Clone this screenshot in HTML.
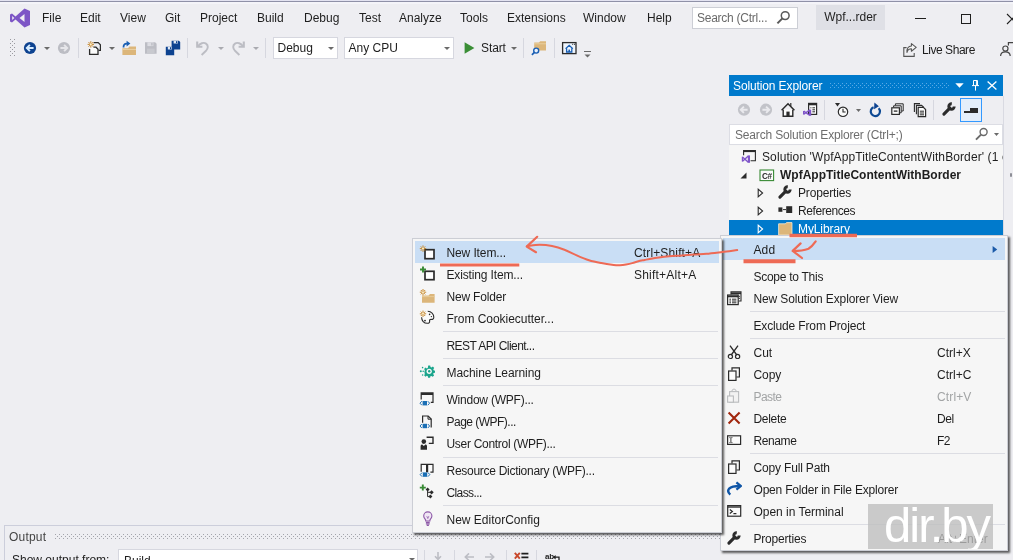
<!DOCTYPE html>
<html>
<head>
<meta charset="utf-8">
<style>
*{box-sizing:border-box;margin:0;padding:0}
body{will-change:transform}
html,body{width:1013px;height:560px;overflow:hidden;background:#eeeef2;font-family:"Liberation Sans",sans-serif;font-size:12px;color:#1e1e1e}
.abs{position:absolute}
#topline{left:0;top:0;width:1013px;height:4px;background:linear-gradient(#e3e3f1 0,#e3e3f1 1px,#8f91a8 1px,#8f91a8 2px,#f4f4f9 2px,#f4f4f9 4px)}
.mi{position:absolute;top:11px;font-size:12px;color:#1e1e1e;white-space:nowrap}
#search{left:692px;top:7px;width:106px;height:22px;letter-spacing:-.25px;background:#fff;border:1px solid #ccced5;font-size:12px;color:#6a6a6a;padding:3px 0 0 4px;white-space:nowrap;overflow:hidden}
#badge{left:816px;top:5px;width:69px;height:25px;background:#dfe0e6;font-size:12px;color:#1e1e1e;text-align:center;line-height:25px}
/* solution explorer */
#se{left:729px;top:76px;width:274px;height:170px;background:#f5f5f5}
#setitle{left:0;top:-1px;width:274px;height:21px;background:#007acc;color:#fff;font-size:12px;line-height:22px;padding-left:4px;letter-spacing:-.12px}
#setb{left:0;top:20px;width:274px;height:29px;background:#eeeef2}
#sesearch{left:0;top:48px;width:274px;height:21px;background:#fff;border:1px solid #dcdde4;color:#6d6d6d;font-size:12px;line-height:20px;padding-left:5px;letter-spacing:-.17px}
#setree{left:0;top:70px;width:274px;height:100px;background:#f6f6f6}
.row{position:absolute;left:0;width:274px;height:18px;line-height:18px;font-size:12px;white-space:nowrap;overflow:hidden}
/* menus */
.menu{position:absolute;background:#f6f6f6;border:1px solid #ccced5;box-shadow:2px 2px 2px rgba(0,0,0,.62)}
.it{position:absolute;left:0;width:286px;height:22px;line-height:24px;font-size:12px;white-space:nowrap}
.it .t{position:absolute;left:32.5px}
.it .k{position:absolute}
.sep{position:absolute;height:1px;background:#dcdde3}
.hl{background:#c9def5}
.dis{color:#a2a4a5}
.combo{background:#fff;border:1px solid #d6d7df;font-size:12px;line-height:20px;padding-left:3.500px;white-space:nowrap}
#wm{left:868px;top:504px;width:125px;height:45px;background:rgba(190,190,190,.78);color:#fff;font-size:49px;line-height:42px;text-align:left;padding-left:16px;letter-spacing:-2px;overflow:hidden;white-space:nowrap}
</style>
</head>
<body>
<div class="abs" id="topline"></div>

<!-- menu bar -->
<svg class="abs" style="left:9px;top:8px" width="22" height="20" viewBox="0 0 22 20"><path d="M15.5 0.5 L21 3 V17 L15.5 19.5 L6.5 11.5 L3 14.5 L1 13.5 V6.5 L3 5.5 L6.5 8.5 Z M15.5 6 L10.5 10 L15.5 14 Z M3.2 8 V12 L5.3 10 Z" fill="#7d56c6" fill-rule="evenodd"/></svg>
<div class="mi" style="left:42px">File</div>
<div class="mi" style="left:80px">Edit</div>
<div class="mi" style="left:120px">View</div>
<div class="mi" style="left:165px">Git</div>
<div class="mi" style="left:200px">Project</div>
<div class="mi" style="left:257px">Build</div>
<div class="mi" style="left:304px">Debug</div>
<div class="mi" style="left:359px">Test</div>
<div class="mi" style="left:399px">Analyze</div>
<div class="mi" style="left:460px">Tools</div>
<div class="mi" style="left:507px">Extensions</div>
<div class="mi" style="left:583px">Window</div>
<div class="mi" style="left:647px">Help</div>
<div class="abs" id="search">Search (Ctrl...</div>
<div class="abs" id="badge">Wpf...rder</div>

<!-- TOOLBAR -->
<div id="toolbar">
<svg class="abs" style="left:10px;top:39px" width="6" height="18" viewBox="0 0 6 18" shape-rendering="crispEdges"><rect x="0" y="0" width="1" height="1" fill="#9a9aa0"/><rect x="4" y="0" width="1" height="1" fill="#9a9aa0"/><rect x="2" y="2" width="1" height="1" fill="#9a9aa0"/><rect x="0" y="4" width="1" height="1" fill="#9a9aa0"/><rect x="4" y="4" width="1" height="1" fill="#9a9aa0"/><rect x="2" y="6" width="1" height="1" fill="#9a9aa0"/><rect x="0" y="8" width="1" height="1" fill="#9a9aa0"/><rect x="4" y="8" width="1" height="1" fill="#9a9aa0"/><rect x="2" y="10" width="1" height="1" fill="#9a9aa0"/><rect x="0" y="12" width="1" height="1" fill="#9a9aa0"/><rect x="4" y="12" width="1" height="1" fill="#9a9aa0"/><rect x="2" y="14" width="1" height="1" fill="#9a9aa0"/><rect x="0" y="16" width="1" height="1" fill="#9a9aa0"/><rect x="4" y="16" width="1" height="1" fill="#9a9aa0"/></svg>
<svg class="abs" style="left:23px;top:41px" width="14" height="14" viewBox="0 0 14 14"><circle cx="7" cy="7" r="6.1" fill="#0d4290"/><path d="M10.600 7H4.200M6.900 3.900L3.800 7L6.900 10.100" stroke="#d6ecff" stroke-width="1.900" fill="none"/></svg>
<svg class="abs" style="left:44px;top:47px" width="6" height="3" viewBox="0 0 6 3"><path d="M0 0H6L3 3Z" fill="#6a6a6a"/></svg>
<svg class="abs" style="left:57px;top:41px" width="14" height="14" viewBox="0 0 14 14"><circle cx="7" cy="7" r="6.100" fill="#bcbdc4"/><path d="M3.400 7H9.800M7.100 3.900L10.200 7L7.100 10.100" stroke="#e6e6ea" stroke-width="1.900" fill="none"/></svg>
<div class="abs" style="left:78px;top:38px;width:1px;height:20px;background:#d6d7df"></div>
<svg class="abs" style="left:87px;top:40px" width="16" height="16" viewBox="0 0 16 16"><path d="M6.600 2.600H11.200L13.400 4.800V10.400H11.600" fill="none" stroke="#2b2b2b" stroke-width="1.200"/><path d="M2.600 9V14.400H11V9.200L9 7.200H6.400" fill="#fbfbfb" stroke="#2b2b2b" stroke-width="1.300"/><g stroke="#c27d1a" stroke-width=".9"><path d="M3.800 1.200V7.600M.6 4.400H7M1.500 2.100L6.100 6.700M6.100 2.100L1.500 6.700"/></g><circle cx="3.800" cy="4.400" r="1.05" fill="#fbeec8"/></svg>
<svg class="abs" style="left:109px;top:47px" width="6" height="3" viewBox="0 0 6 3"><path d="M0 0H6L3 3Z" fill="#6a6a6a"/></svg>
<svg class="abs" style="left:121px;top:40px" width="16" height="16" viewBox="0 0 16 16"><path d="M1.400 15V8.200H7L8.400 6.400H15V15Z" fill="#dcb67a"/><path d="M1.400 9.400H15" stroke="#ecd5a8" stroke-width=".9"/><path d="M5.600 .8L9.400 3.600L5.600 6.400V4.600C4.200 4.600 3.400 5.400 3.400 7.400H1.600C1.600 4.400 3 2.800 5.600 2.700Z" fill="#1a5fb4"/></svg>
<svg class="abs" style="left:144px;top:41px" width="14" height="14" viewBox="0 0 14 14"><path d="M1 1.300H11.200L12.600 2.700V12.700H1Z" fill="#bcbdc4"/><rect x="3.400" y="1.300" width="6" height="3.800" fill="#dcdce2"/><rect x="7.200" y="1.900" width="1.400" height="2.600" fill="#bcbdc4"/><rect x="3" y="7.600" width="7.600" height="5.100" fill="#c8c9cf"/></svg>
<svg class="abs" style="left:165px;top:40px" width="16" height="16" viewBox="0 0 16 16"><path d="M6.6 0.8H13.9L15.2 2.1V9.4H6.6Z" fill="#0d4290"/><rect x="8.6" y="0.8" width="4.2" height="2.700" fill="#dfe7f3"/><rect x="11.0" y="1.2" width="1.200" height="1.900" fill="#0d4290"/><path d="M0.8 6.8H7.9L9.2 8.1V15.2H0.8Z" fill="#0d4290"/><rect x="2.8" y="6.8" width="4.0" height="2.700" fill="#dfe7f3"/><rect x="5" y="7.2" width="1.200" height="1.900" fill="#0d4290"/></svg>
<div class="abs" style="left:187px;top:38px;width:1px;height:20px;background:#d6d7df"></div>
<svg class="abs" style="left:196px;top:40px" width="14" height="16" viewBox="0 0 14 16"><path d="M1.200 1.600V6.800H6.400" fill="none" stroke="#bcbdc4" stroke-width="2.100"/><path d="M2 6.200C4 3.400 7.600 2 10 3.600C12.600 5.400 12.200 8.600 10 10.800L5.600 15" fill="none" stroke="#bcbdc4" stroke-width="1.900"/></svg>
<svg class="abs" style="left:218px;top:47px" width="6" height="3" viewBox="0 0 6 3"><path d="M0 0H6L3 3Z" fill="#a9aab0"/></svg>
<svg class="abs" style="left:231px;top:40px;transform:scaleX(-1)" width="14" height="16" viewBox="0 0 14 16"><path d="M1.200 1.600V6.800H6.400" fill="none" stroke="#bcbdc4" stroke-width="2.100"/><path d="M2 6.200C4 3.400 7.600 2 10 3.600C12.600 5.400 12.200 8.600 10 10.800L5.600 15" fill="none" stroke="#bcbdc4" stroke-width="1.900"/></svg>
<svg class="abs" style="left:253px;top:47px" width="6" height="3" viewBox="0 0 6 3"><path d="M0 0H6L3 3Z" fill="#a9aab0"/></svg>
<div class="abs" style="left:265px;top:38px;width:1px;height:20px;background:#d6d7df"></div>
<div class="abs combo" style="left:273px;top:37px;width:65px;height:22px"><span>Debug</span></div><svg class="abs" style="left:328px;top:47px" width="6" height="3" viewBox="0 0 6 3"><path d="M0 0H6L3 3Z" fill="#6a6a6a"/></svg>
<div class="abs combo" style="left:344px;top:37px;width:110px;height:22px"><span>Any CPU</span></div><svg class="abs" style="left:444px;top:47px" width="6" height="3" viewBox="0 0 6 3"><path d="M0 0H6L3 3Z" fill="#6a6a6a"/></svg>
<svg class="abs" style="left:464px;top:42px" width="11" height="12" viewBox="0 0 11 12"><path d="M.6 .2L10.400 6L.6 11.800Z" fill="#3a8e36"/></svg>
<div class="abs" style="left:481px;top:41px;font-size:12px;line-height:14px;letter-spacing:-.1px">Start</div>
<svg class="abs" style="left:511px;top:47px" width="6" height="3" viewBox="0 0 6 3"><path d="M0 0H6L3 3Z" fill="#6a6a6a"/></svg>
<div class="abs" style="left:523px;top:38px;width:1px;height:20px;background:#d6d7df"></div>
<svg class="abs" style="left:531px;top:40px" width="16" height="16" viewBox="0 0 16 16"><path d="M3.200 10.400V2.600H8L9.200 1.200H15V10.400Z" fill="#dcb67a"/><path d="M3.200 3.800H15" stroke="#ecd5a8" stroke-width=".8"/><circle cx="5.200" cy="10.600" r="2.500" fill="#eaf2fb" stroke="#1a5fb4" stroke-width="1.400"/><path d="M3.400 12.400L.9 14.900" stroke="#1a5fb4" stroke-width="1.700"/></svg>
<div class="abs" style="left:554px;top:38px;width:1px;height:20px;background:#d6d7df"></div>
<svg class="abs" style="left:561px;top:41px" width="16" height="14" viewBox="0 0 16 14"><rect x="1.600" y="1.600" width="13.400" height="11" fill="#eef4fb" stroke="#2b2b2b" stroke-width="1.300"/><path d="M11.200 3.300H12.200M13 3.300H14" stroke="#2b2b2b" stroke-width="1"/><path d="M4.600 7.800L8.200 4.400L11.800 7.800M5.600 7.400V11H10.800V7.400" fill="none" stroke="#1a5fb4" stroke-width="1.300"/><rect x="7.400" y="8.600" width="1.600" height="2.400" fill="#1a5fb4"/></svg>
<svg class="abs" style="left:584px;top:50px" width="7" height="8" viewBox="0 0 7 8"><path d="M0 1.500H7" stroke="#6a6a6a" stroke-width="1"/><path d="M.500 4.500H6.500L3.500 7.500Z" fill="#6a6a6a"/></svg>
<svg class="abs" style="left:902px;top:42px" width="16" height="16" viewBox="0 0 16 16"><path d="M4.600 5.600H1.800V14.400H12.200V11" fill="none" stroke="#555" stroke-width="1.100"/><path d="M9.400 1.600L14.200 5.400L9.400 9.200V6.800C7.200 6.800 5.600 8 5 10.400C4.800 7 6.400 4.200 9.400 4Z" fill="#f6f6f6" stroke="#555" stroke-width="1.100" stroke-linejoin="round"/></svg>
<div class="abs" style="left:922px;top:43px;font-size:12px;line-height:14px;letter-spacing:-.45px">Live Share</div>
<svg class="abs" style="left:999px;top:41px" width="14" height="16" viewBox="0 0 14 16"><circle cx="6.400" cy="7.600" r="2.600" fill="none" stroke="#444" stroke-width="1.200"/><path d="M1.600 15C1.600 12.200 3.600 10.800 6.400 10.800C9.200 10.800 11.200 12.200 11.200 15" fill="none" stroke="#444" stroke-width="1.200"/><path d="M9.400 4.400V1.600H14" fill="none" stroke="#444" stroke-width="1.200"/></svg>
<div class="abs" style="left:915px;top:18px;width:11px;height:1px;background:#1e1e1e"></div>
<div class="abs" style="left:961px;top:14px;width:10px;height:10px;border:1px solid #1e1e1e"></div>
<svg class="abs" style="left:1006px;top:13px" width="7" height="12" viewBox="0 0 7 12"><path d="M1 1L11 11M11 1L1 11" stroke="#1e1e1e" stroke-width="1.100"/></svg>
<svg class="abs" style="left:776px;top:10px" width="15" height="15" viewBox="0 0 15 15"><circle cx="9.200" cy="5.600" r="3.900" fill="none" stroke="#5a5a5a" stroke-width="1.500"/><path d="M6.400 8.400L1.400 13.400" stroke="#5a5a5a" stroke-width="2"/></svg>
</div>

<!-- SOLUTION EXPLORER -->
<div class="abs" id="se">
  <div class="abs" id="setitle">Solution Explorer</div>
  <div class="abs" id="setb"></div>
  <div class="abs" id="sesearch">Search Solution Explorer (Ctrl+;)</div>
<div class="abs" style="left:101px;top:7px;width:119px;height:5px;background-image:radial-gradient(circle at .5px .5px,#5aaae6 .6px,transparent .7px),radial-gradient(circle at 2.5px 2.5px,#5aaae6 .6px,transparent .7px);background-size:4px 4px"></div>
<svg class="abs" style="left:226px;top:7px" width="9" height="5" viewBox="0 0 9 5"><path d="M.3 .3H8.700L4.500 4.700Z" fill="#fff"/></svg>
<svg class="abs" style="left:242px;top:4px" width="9" height="11" viewBox="0 0 9 11"><path d="M2.500 .5H6.500V5.500M2.500 .5V5.500M5.400 .5V5.500M1 5.600H8M4.500 5.600V10.600" stroke="#fff" stroke-width="1" fill="none"/></svg>
<svg class="abs" style="left:258px;top:5px" width="10" height="9" viewBox="0 0 10 9"><path d="M.6 .5L9.400 8.500M9.400 .5L.6 8.500" stroke="#fff" stroke-width="1.300"/></svg>
<svg class="abs" style="left:8px;top:27px" width="14" height="14" viewBox="0 0 14 14"><circle cx="7" cy="6.700" r="6.100" fill="#c2c3c9"/><path d="M10.600 7H4.200M6.900 3.900L3.800 7L6.900 10.100" transform="translate(0,-.3)" stroke="#eaeaee" stroke-width="1.900" fill="none"/></svg>
<svg class="abs" style="left:30px;top:27px" width="14" height="14" viewBox="0 0 14 14"><circle cx="7" cy="6.700" r="6.100" fill="#c2c3c9"/><path d="M3.400 7H9.800M7.100 3.900L10.200 7L7.100 10.100" transform="translate(0,-.3)" stroke="#eaeaee" stroke-width="1.900" fill="none"/></svg>
<svg class="abs" style="left:51px;top:26px" width="16" height="16" viewBox="0 0 16 16"><path d="M1.600 8.200L8 1.800L14.400 8.200" fill="none" stroke="#2b2b2b" stroke-width="1.500"/><path d="M10.800 1V4.400" stroke="#2b2b2b" stroke-width="1.200"/><path d="M3.200 7.400V14.200H12.800V7.400" fill="#fbfbfb" stroke="#2b2b2b" stroke-width="1.400"/><rect x="6.400" y="9.600" width="3.200" height="4.600" fill="#2b2b2b"/></svg>
<svg class="abs" style="left:73px;top:26px" width="16" height="16" viewBox="0 0 16 16"><rect x="6.600" y="1.400" width="8" height="11" fill="#fbfbfb" stroke="#2b2b2b" stroke-width="1.200"/><path d="M6.600 2.200H14.600" stroke="#2b2b2b" stroke-width="2.200"/><path d="M8.400 5.800H9.400M10.400 5.800H13M10.400 7.800H13M10.400 9.800H13" stroke="#2b2b2b" stroke-width="1"/><g stroke="#7f55c9" fill="none" stroke-linecap="butt"><path d="M8.1 7.6V13.8" stroke-width="2.2"/><path d="M7.5 8.1L1.7 12.3M7.5 13.3L1.7 9.1" stroke-width="1.4"/><path d="M1.6 8.9V12.5" stroke-width="1.2"/></g></svg>
<div class="abs" style="left:95px;top:24px;width:1px;height:20px;background:#d6d7df"></div>
<svg class="abs" style="left:105px;top:26px" width="16" height="16" viewBox="0 0 16 16"><path d="M1 1H6L3.500 4.600Z" fill="#2b2b2b"/><circle cx="9" cy="9.800" r="4.700" fill="#fbfbfb" stroke="#2b2b2b" stroke-width="1.200"/><path d="M9 6.800V10H11.600" fill="none" stroke="#2b2b2b" stroke-width="1.100"/></svg>
<svg class="abs" style="left:127px;top:33px" width="5" height="3" viewBox="0 0 5 3"><path d="M0 0H5L2.500 3Z" fill="#6a6a6a"/></svg>
<svg class="abs" style="left:139px;top:26px" width="15" height="16" viewBox="0 0 15 16"><path d="M10.600 6.200A4.600 4.600 0 1 1 5.600 5.200" fill="none" stroke="#0e4a94" stroke-width="2.200"/><path d="M5.400 1.200L10.800 3.400L7.200 7.800Z" fill="#0d4290" transform="rotate(18 8 4)"/></svg>
<svg class="abs" style="left:162px;top:27px" width="13" height="13" viewBox="0 0 13 13"><path d="M4.400 2.400V.8H12.200V8H10.400" fill="none" stroke="#2b2b2b" stroke-width="1"/><path d="M2.600 4.400V2.800H10.200V9.800H8.600" fill="none" stroke="#2b2b2b" stroke-width="1"/><rect x=".8" y="4.800" width="7.600" height="6.600" fill="#fbfbfb" stroke="#2b2b2b" stroke-width="1.200"/><path d="M2.800 8.100H6.400" stroke="#2b2b2b" stroke-width="1.300"/></svg>
<svg class="abs" style="left:182px;top:26px" width="16" height="16" viewBox="0 0 16 16"><path d="M3.400 10V1.600H9" fill="none" stroke="#2b2b2b" stroke-width="1.100"/><path d="M5.400 12.200V3.400H10.600L12.800 5.400" fill="none" stroke="#2b2b2b" stroke-width="1.100"/><path d="M7.200 5.400H12.400L14.600 7.600V14.600H7.200Z" fill="#fbfbfb" stroke="#2b2b2b" stroke-width="1.200"/><path d="M8.800 9.200H13M8.800 11H13M8.800 12.800H13" stroke="#2b2b2b" stroke-width="1"/></svg>
<div class="abs" style="left:204px;top:24px;width:1px;height:20px;background:#d6d7df"></div>
<svg class="abs" style="left:212px;top:25px" width="16" height="16" viewBox="0 0 16 16"><path d="M2.900 13.100L8.800 7.200" stroke="#2b2b2b" stroke-width="3.100" stroke-linecap="round"/><circle cx="10.500" cy="5.500" r="2.700" fill="none" stroke="#2b2b2b" stroke-width="2.900" stroke-dasharray="12.700 4.300"/></svg>
<div class="abs" style="left:231px;top:22px;width:22px;height:24px;border:1px solid #3399ff;background:#e4eefa"></div>
<div class="abs" style="left:235px;top:35px;width:14px;height:1.500px;background:#2b2b2b"></div><div class="abs" style="left:241px;top:32px;width:8px;height:4px;background:#2b2b2b"></div>
<svg class="abs" style="left:246px;top:51px" width="14" height="14" viewBox="0 0 14 14"><circle cx="8.600" cy="5" r="3.500" fill="none" stroke="#6a6a6a" stroke-width="1.400"/><path d="M6 7.600L1 12.600" stroke="#6a6a6a" stroke-width="1.900"/></svg>
<svg class="abs" style="left:265px;top:57px" width="5" height="3" viewBox="0 0 5 3"><path d="M0 0H5L2.500 3Z" fill="#6a6a6a"/></svg>
  <div class="abs" id="setree">
    <div class="row" style="top:2px"><span class="abs" style="left:33px;letter-spacing:.1px">Solution 'WpfAppTitleContentWithBorder' (1 of 1 project)</span></div>
    <div class="row" style="top:20px"><span class="abs" style="left:51px;font-weight:bold">WpfAppTitleContentWithBorder</span></div>
    <div class="row" style="top:38px"><span class="abs" style="left:69px;letter-spacing:-.15px">Properties</span></div>
    <div class="row" style="top:56px"><span class="abs" style="left:69px;letter-spacing:-.42px">References</span></div>
    <div class="row" style="top:74px;background:#007acc;color:#fff"><span class="abs" style="left:69px;letter-spacing:-.1px">MyLibrary</span></div>
<svg class="abs" style="left:12px;top:3px" width="16" height="15" viewBox="0 0 16 15"><path d="M2.600 6.200V1.600H14.400V11.800H9.600" fill="none" stroke="#2b2b2b" stroke-width="1.100"/><path d="M2.600 2.200H14.400" stroke="#2b2b2b" stroke-width="1.800"/><g stroke="#7f55c9" fill="none" stroke-linecap="butt"><path d="M7.9 6.4V13.8" stroke-width="2.2"/><path d="M7.3 6.9L1.5 12.3M7.3 13.3L1.5 7.9" stroke-width="1.4"/><path d="M1.4 7.7V12.5" stroke-width="1.2"/></g></svg>
<svg class="abs" style="left:11px;top:25.500px" width="7" height="7" viewBox="0 0 7 7"><path d="M6.500 .5V6.500H.5Z" fill="#2b2b2b"/></svg>
<svg class="abs" style="left:30px;top:23px" width="16" height="13" viewBox="0 0 16 13"><rect x="1" y="1" width="13.600" height="10.600" fill="#fbfbfb" stroke="#388a34" stroke-width="1.100"/><text x="3" y="9.600" font-family="Liberation Sans, sans-serif" font-size="8.200" font-weight="bold" fill="#2b2b2b" letter-spacing="-.5">C#</text></svg>
<svg class="abs" style="left:28px;top:42px" width="7" height="10" viewBox="0 0 7 10"><path d="M1.200 1.200L5.600 5L1.200 8.800Z" fill="none" stroke="#2b2b2b" stroke-width="1.100"/></svg>
<svg class="abs" style="left:28px;top:60px" width="7" height="10" viewBox="0 0 7 10"><path d="M1.200 1.200L5.600 5L1.200 8.800Z" fill="none" stroke="#2b2b2b" stroke-width="1.100"/></svg>
<svg class="abs" style="left:28px;top:78px" width="7" height="10" viewBox="0 0 7 10"><path d="M1.200 1.200L5.600 5L1.200 8.800Z" fill="none" stroke="#fff" stroke-width="1.100"/></svg>
<svg class="abs" style="left:48px;top:38px" width="16" height="16" viewBox="0 0 16 16"><path d="M2.900 13.100L8.800 7.200" stroke="#2b2b2b" stroke-width="3.100" stroke-linecap="round"/><circle cx="10.500" cy="5.500" r="2.700" fill="none" stroke="#2b2b2b" stroke-width="2.900" stroke-dasharray="12.700 4.300"/></svg>
<svg class="abs" style="left:48px;top:57px" width="16" height="14" viewBox="0 0 16 14"><rect x="1.400" y="4.400" width="4" height="4.400" fill="#2b2b2b"/><path d="M6 6.600H9" stroke="#2b2b2b" stroke-width="1"/><rect x="9.200" y="3.200" width="6" height="6.800" fill="#2b2b2b"/></svg>
<svg class="abs" style="left:48px;top:75px" width="16" height="16" viewBox="0 0 16 16"><path d="M1.600 14V2.800H8.200L9.600 1.600H15V14Z" fill="#dcb67a" stroke="#f4ead6" stroke-width=".8"/></svg>
  </div>
</div>

<div class="abs" style="left:1003px;top:96px;width:1px;height:141px;background:#d9dae2"></div>
<div class="abs" style="left:1010px;top:173px;width:2px;height:4px;background:#8d8e96;border-radius:1px"></div>
<!-- OUTPUT -->
<div id="out">
<div class="abs" style="left:4px;top:525px;width:718px;height:1px;background:#cccedb"></div>
<div class="abs" style="left:4px;top:525px;width:1px;height:35px;background:#cccedb"></div>
<div class="abs" style="left:9px;top:530px;font-size:12px;line-height:14px;color:#444;letter-spacing:.2px">Output</div>
<div class="abs" style="left:55px;top:534px;width:667px;height:6px;background-image:radial-gradient(circle at .5px .5px,#a3a4ab .6px,transparent .7px),radial-gradient(circle at 2.5px 2.5px,#a3a4ab .6px,transparent .7px);background-size:4px 4px"></div>
<div class="abs" style="left:12px;top:553px;font-size:12px;line-height:14px;color:#1e1e1e;white-space:nowrap">Show output from:</div>
<div class="abs combo" style="left:118px;top:549px;width:300px;height:22px;line-height:22px;padding-left:5px">Build</div>
<svg class="abs" style="left:409px;top:558px" width="6" height="3" viewBox="0 0 6 3"><path d="M0 0H6L3 3Z" fill="#6a6a6a"/></svg>
<div class="abs" style="left:424px;top:550px;width:1px;height:10px;background:#d6d7df"></div>
<div class="abs" style="left:454px;top:550px;width:1px;height:10px;background:#d6d7df"></div>
<div class="abs" style="left:506px;top:550px;width:1px;height:10px;background:#d6d7df"></div>
<div class="abs" style="left:536px;top:550px;width:1px;height:10px;background:#d6d7df"></div>
<svg class="abs" style="left:433px;top:552px" width="10" height="10" viewBox="0 0 10 10"><path d="M5 0V7M2 4.200L5 7.400L8 4.200" stroke="#bcbdc4" stroke-width="1.600" fill="none"/></svg>
<svg class="abs" style="left:464px;top:553px" width="10" height="8" viewBox="0 0 10 8"><path d="M10 4H1.500M5 .4L1.300 4L5 7.600" stroke="#bcbdc4" stroke-width="1.600" fill="none"/></svg>
<svg class="abs" style="left:485px;top:553px" width="10" height="8" viewBox="0 0 10 8"><path d="M0 4H8.500M5 .4L8.700 4L5 7.600" stroke="#bcbdc4" stroke-width="1.600" fill="none"/></svg>
<svg class="abs" style="left:514px;top:552px" width="15" height="8" viewBox="0 0 15 8"><path d="M.8 .8L5.800 6.600M5.800 .8L.8 6.600" stroke="#c8482c" stroke-width="1.900"/><path d="M7.400 1.600H14.400M7.400 5.400H14.400" stroke="#1e1e1e" stroke-width="1.800"/></svg>
<div class="abs" style="left:545px;top:552px;font-size:8px;line-height:9px;font-weight:bold;color:#1e1e1e;letter-spacing:-.3px">ab</div>
<svg class="abs" style="left:553px;top:555px" width="7" height="5" viewBox="0 0 7 5"><path d="M.5 2.200H6V5" stroke="#1e1e1e" stroke-width="1.300" fill="none"/><path d="M0 2.200L2.600 0V4.400Z" fill="#1e1e1e"/></svg>
</div>

<!-- RIGHT CONTEXT MENU -->
<div class="menu" id="m2" style="left:720px;top:235px;width:288px;height:316px">
<div class="abs" style="left:0;top:1px;width:100%;height:1px;overflow:visible">
<div class="abs hl" style="left:2px;top:1px;width:282px;height:22px"></div>
<div class="it " style="top:1px"><span class="t" style="letter-spacing:0.11px;">Add</span></div>
<div class="it " style="top:28px"><span class="t" style="letter-spacing:-0.27px;">Scope to This</span></div>
<div class="it " style="top:50px"><svg class="abs" style="left:5px;top:3px" width="16" height="16" viewBox="0 0 16 16"><path d="M5 4.400V1.900H15V11H12.600" fill="#fbfbfb" stroke="#2b2b2b" stroke-width="1.100"/><path d="M5 3.300H15" stroke="#2b2b2b" stroke-width="1.800"/><path d="M12.600 6.300H14M12.600 8.300H14" stroke="#2b2b2b" stroke-width="1"/><rect x="1.600" y="5" width="10.600" height="9.600" fill="#fbfbfb" stroke="#2b2b2b" stroke-width="1.200"/><path d="M1.600 6.400H12.200" stroke="#2b2b2b" stroke-width="1.800"/><path d="M3.400 9.200H5M6 9.200H10.400M3.400 11H5M6 11H10.400M3.400 12.800H5M6 12.800H10.400" stroke="#2b2b2b" stroke-width="1"/></svg><span class="t" style="letter-spacing:-0.13px;">New Solution Explorer View</span></div>
<div class="it " style="top:77px"><span class="t" style="letter-spacing:-0.15px;">Exclude From Project</span></div>
<div class="it " style="top:104px"><svg class="abs" style="left:5px;top:3px" width="16" height="16" viewBox="0 0 16 16"><path d="M4 1.600L10.800 11M12 1.600L5.200 11" stroke="#2b2b2b" stroke-width="1.300" fill="none"/><circle cx="4.400" cy="12.400" r="2.100" fill="none" stroke="#2b2b2b" stroke-width="1.200"/><circle cx="11.600" cy="12.400" r="2.100" fill="none" stroke="#2b2b2b" stroke-width="1.200"/></svg><span class="t" style="letter-spacing:0.0px;">Cut</span><span class="k" style="letter-spacing:0.04px;;left:216px">Ctrl+X</span></div>
<div class="it " style="top:126px"><svg class="abs" style="left:5px;top:3px" width="16" height="16" viewBox="0 0 16 16"><path d="M6 4.400V1.800H13.400V11H10.400" fill="none" stroke="#2b2b2b" stroke-width="1.200"/><rect x="2.600" y="5" width="7.400" height="9.400" fill="#fbfbfb" stroke="#2b2b2b" stroke-width="1.200"/></svg><span class="t" style="letter-spacing:-0.05px;">Copy</span><span class="k" style="letter-spacing:0.03px;;left:216px">Ctrl+C</span></div>
<div class="it dis" style="top:148px"><svg class="abs" style="left:5px;top:3px" width="16" height="16" viewBox="0 0 16 16"><g opacity=".9"><path d="M6 3.600V2.200L8 .9L10 2.200V3.600" fill="none" stroke="#b4b6b8" stroke-width="1"/><rect x="3.600" y="3.600" width="9" height="10.600" fill="#f2f2f2" stroke="#b4b6b8" stroke-width="1.100"/><rect x="1.600" y="8" width="5.800" height="6.200" fill="#f6f6f6" stroke="#b4b6b8" stroke-width="1.100"/></g></svg><span class="t" style="letter-spacing:-0.58px;">Paste</span><span class="k" style="letter-spacing:0.14px;;left:216px">Ctrl+V</span></div>
<div class="it " style="top:170px"><svg class="abs" style="left:5px;top:3px" width="16" height="16" viewBox="0 0 16 16"><path d="M2.600 2.400L13.600 13.400M13.600 2.400L2.600 13.400" stroke="#a1260d" stroke-width="2.100" fill="none"/></svg><span class="t" style="letter-spacing:-0.3px;">Delete</span><span class="k" style="letter-spacing:-0.37px;;left:216px">Del</span></div>
<div class="it " style="top:192px"><svg class="abs" style="left:5px;top:3px" width="16" height="16" viewBox="0 0 16 16"><rect x="1.600" y="3.800" width="13" height="8.600" fill="#fbfbfb" stroke="#2b2b2b" stroke-width="1.200"/><path d="M3.400 5.600H4.400M5.400 5.600H6.400M4.900 5.600V10.600M3.400 10.600H4.400M5.400 10.600H6.400" stroke="#2b2b2b" stroke-width=".9" fill="none"/></svg><span class="t" style="letter-spacing:-0.41px;">Rename</span><span class="k" style="letter-spacing:-0.7px;;left:216px">F2</span></div>
<div class="it " style="top:219px"><svg class="abs" style="left:5px;top:3px" width="16" height="16" viewBox="0 0 16 16"><path d="M6 4.400V1.800H13.400V11H10.400" fill="none" stroke="#2b2b2b" stroke-width="1.200"/><rect x="2.600" y="5" width="7.400" height="9.400" fill="#fbfbfb" stroke="#2b2b2b" stroke-width="1.200"/></svg><span class="t" style="letter-spacing:-0.17px;">Copy Full Path</span></div>
<div class="it " style="top:241px"><svg class="abs" style="left:5px;top:3px" width="16" height="16" viewBox="0 0 16 16"><path d="M10.400 1.300L14.900 5L10.400 8.700" fill="none" stroke="#0f55a6" stroke-width="2.300" stroke-linejoin="miter"/><path d="M14 5C9 5 5.500 5.200 3.200 7.600C1.700 9.400 1.900 11.600 4.300 13.600" fill="none" stroke="#0f55a6" stroke-width="2.400"/></svg><span class="t" style="letter-spacing:-0.2px;">Open Folder in File Explorer</span></div>
<div class="it " style="top:263px"><svg class="abs" style="left:5px;top:3px" width="16" height="16" viewBox="0 0 16 16"><rect x="1.700" y="2.600" width="13" height="10.600" fill="#fbfbfb" stroke="#2b2b2b" stroke-width="1.200"/><path d="M1.700 4H14.700" stroke="#2b2b2b" stroke-width="1.400"/><path d="M3.800 6.400L6.400 8.400L3.800 10.400M7.400 10.600H10.400" stroke="#2b2b2b" stroke-width="1.200" fill="none"/></svg><span class="t" style="letter-spacing:-0.03px;">Open in Terminal</span></div>
<div class="it " style="top:290px"><svg class="abs" style="left:5px;top:3px" width="16" height="16" viewBox="0 0 16 16"><path d="M2.900 13.100L8.800 7.200" stroke="#2b2b2b" stroke-width="3.100" stroke-linecap="round"/><circle cx="10.500" cy="5.500" r="2.700" fill="none" stroke="#2b2b2b" stroke-width="2.900" stroke-dasharray="12.700 4.300"/></svg><span class="t" style="letter-spacing:-0.2px;">Properties</span><span class="k" style="left:217px">Alt+Enter</span></div>
<div class="sep" style="top:74px;left:29px;width:255px"></div>
<div class="sep" style="top:101px;left:29px;width:255px"></div>
<div class="sep" style="top:216px;left:29px;width:255px"></div>
<div class="sep" style="top:287px;left:29px;width:255px"></div>
<svg class="abs" style="left:271px;top:8px" width="6" height="9" viewBox="0 0 6 9"><path d="M.6 1L5.200 4.500L.6 8Z" fill="#1b5aa8"/></svg>

</div>
</div>

<!-- LEFT SUBMENU -->
<div class="menu" id="m1" style="left:412px;top:238px;width:310px;height:295px">
<div class="abs" style="left:1px;top:0;width:1px;height:1px;overflow:visible">
<div class="abs hl" style="left:1px;top:2px;width:304px;height:22px"></div>
<div class="it " style="top:2px"><svg class="abs" style="left:5px;top:3px" width="16" height="16" viewBox="0 0 16 16"><rect x="6" y="5.7" width="9" height="9" fill="#fff" stroke="#2b2b2b" stroke-width="1.7"/><g stroke="#c27d1a" stroke-width=".9" fill="none"><path d="M4 1.4V7.8M0.8 4.6H7.2M1.8 2.4L6.2 6.8M6.2 2.4L1.8 6.8"/></g><circle cx="4" cy="4.6" r="1.05" fill="#fbeec8"/></svg><span class="t" style="letter-spacing:-0.11px;">New Item...</span><span class="k" style="letter-spacing:0.14px;;left:220px">Ctrl+Shift+A</span></div>
<div class="it " style="top:24px"><svg class="abs" style="left:5px;top:3px" width="16" height="16" viewBox="0 0 16 16"><rect x="6" y="5.3" width="9" height="8.4" fill="#fff" stroke="#2b2b2b" stroke-width="1.7"/><path d="M1 3.5H7M4 0.5V6.5" stroke="#388a34" stroke-width="1.9" fill="none"/></svg><span class="t" style="letter-spacing:-0.14px;">Existing Item...</span><span class="k" style="letter-spacing:0.22px;;left:220px">Shift+Alt+A</span></div>
<div class="it " style="top:46px"><svg class="abs" style="left:5px;top:3px" width="16" height="16" viewBox="0 0 16 16"><path d="M3 14.7V7.6H9.6L11 5.9H15.6V14.7Z" fill="#dcb67a"/><path d="M3 8.6H15.6" stroke="#e9cf9f" stroke-width=".8"/><g stroke="#c27d1a" stroke-width=".9" fill="none"><path d="M4 1.0V7.4M0.8 4.2H7.2M1.8 2.0L6.2 6.4M6.2 2.0L1.8 6.4"/></g><circle cx="4" cy="4.2" r="1.05" fill="#fbeec8"/></svg><span class="t" style="letter-spacing:-0.19px;">New Folder</span></div>
<div class="it " style="top:68px"><svg class="abs" style="left:5px;top:3px" width="16" height="16" viewBox="0 0 16 16"><path d="M8.7 1.3C12.3 1.3 14.8 4 14.8 7.3C14.8 8.9 13.6 9.6 12.4 9.4C11 9.2 10.3 10 10.6 11C10.9 12.2 10.2 13.3 8.4 13.3C4.8 13.3 2.6 10.6 2.6 7.3" fill="#fbfbfb" stroke="#2b2b2b" stroke-width="1.1"/><circle cx="6" cy="10.6" r=".9" fill="#2b2b2b"/><circle cx="10.6" cy="4.4" r=".8" fill="#2b2b2b"/><circle cx="12.4" cy="6.6" r=".7" fill="#2b2b2b"/><g stroke="#c27d1a" stroke-width=".9" fill="none"><path d="M4 0.6V7.0M0.8 3.8H7.2M1.8 1.6L6.2 6.0M6.2 1.6L1.8 6.0"/></g><circle cx="4" cy="3.8" r="1.05" fill="#fbeec8"/></svg><span class="t" style="letter-spacing:-0.03px;">From Cookiecutter...</span></div>
<div class="it " style="top:95px"><span class="t" style="letter-spacing:-0.55px;">REST API Client...</span></div>
<div class="it " style="top:122px"><svg class="abs" style="left:5px;top:3px" width="16" height="16" viewBox="0 0 16 16"><g fill="#1ba58c"><path d="M9.2 1.4h2l.3 1.5 1 .5 1.4-.8 1.3 1.5-.9 1.2.3 1 1.5.4v2l-1.5.4-.4 1 .9 1.3-1.4 1.4-1.3-.9-1 .4-.3 1.5h-2l-.3-1.5-1-.5-1.3.9-1.4-1.4.8-1.3-.4-1V7.300l.4-1-.8-1.200 1.400-1.500 1.300.8 1-.5z"/></g><circle cx="10.200" cy="7.3" r="2.600" fill="#f6f6f6"/><circle cx="10.2" cy="7.3" r="1.200" fill="#1ba58c"/><circle cx="1.8" cy="7.3" r="1" fill="#1ba58c"/><circle cx="4.2" cy="7.3" r=".8" fill="#1ba58c"/><circle cx="3.6" cy="3.600" r=".8" fill="#1ba58c"/><circle cx="3.600" cy="11" r=".8" fill="#1ba58c"/></svg><span class="t" style="letter-spacing:-0.06px;">Machine Learning</span></div>
<div class="it " style="top:149px"><svg class="abs" style="left:5px;top:3px" width="16" height="16" viewBox="0 0 16 16"><path d="M1.6 1.2H14.6V12H11.8V10.800H13.400V4H2.800V8.600H1.600Z" fill="#2b2b2b"/><rect x="3.6" y="10" width="4.4" height="4.4" fill="#1a6fb5"/><path d="M2.8 10.2L1.0 12.2L2.8 14.2M8.8 10.2L10.6 12.2L8.8 14.2" stroke="#1a6fb5" stroke-width="1" fill="none"/></svg><span class="t" style="letter-spacing:-0.23px;">Window (WPF)...</span></div>
<div class="it " style="top:171px"><svg class="abs" style="left:5px;top:3px" width="16" height="16" viewBox="0 0 16 16"><path d="M3.600 9.800V3H9.200L12.200 6V14H11.600" fill="none" stroke="#2b2b2b" stroke-width="1.200"/><path d="M9 3V6.200H12.200" fill="none" stroke="#2b2b2b" stroke-width="1"/><rect x="3.6" y="10.8" width="4.4" height="4.4" fill="#1a6fb5"/><path d="M2.8 11.0L1.0 13.0L2.8 15.0M8.8 11.0L10.6 13.0L8.8 15.0" stroke="#1a6fb5" stroke-width="1" fill="none"/></svg><span class="t" style="letter-spacing:-0.52px;">Page (WPF)...</span></div>
<div class="it " style="top:193px"><svg class="abs" style="left:5px;top:3px" width="16" height="16" viewBox="0 0 16 16"><path d="M7.600 2.200H14V8.400H9.800" fill="none" stroke="#2b2b2b" stroke-width="1.400"/><circle cx="4.800" cy="6.600" r="2.300" fill="#2b2b2b"/><path d="M1.600 14.700V11.200C1.600 10.200 2.400 9.600 3.200 9.600L4.800 11L6.400 9.600C7.300 9.600 8 10.200 8 11.200V14.700Z" fill="#2b2b2b"/></svg><span class="t" style="letter-spacing:-0.3px;">User Control (WPF)...</span></div>
<div class="it " style="top:220px"><svg class="abs" style="left:5px;top:3px" width="16" height="16" viewBox="0 0 16 16"><path d="M2.200 9.800V2.400H7.600V10.200M8.600 10.200V2.400H14V10.200H11.400" fill="#fbfbfb" stroke="#2b2b2b" stroke-width="1.200"/><rect x="3.8" y="10.4" width="4.4" height="4.4" fill="#1a6fb5"/><path d="M3.0 10.6L1.2 12.6L3.0 14.6M9.0 10.6L10.8 12.6L9.0 14.6" stroke="#1a6fb5" stroke-width="1" fill="none"/></svg><span class="t" style="letter-spacing:-0.28px;">Resource Dictionary (WPF)...</span></div>
<div class="it " style="top:242px"><svg class="abs" style="left:5px;top:3px" width="16" height="16" viewBox="0 0 16 16"><path d="M0.8 3.6H6.8M3.8 0.6V6.6" stroke="#388a34" stroke-width="1.9" fill="none"/><g fill="#2b2b2b"><path d="M8.600 3.400l2 2-2 2-2-2z"/><path d="M12.600 6.200l2.100 2.100-2.100 2.100-2.100-2.100z"/><path d="M11.400 10.600l2 2-2 2-2-2z"/></g><path d="M8.600 6.600V12.600H10M8.600 8.300H11" stroke="#2b2b2b" stroke-width="1" fill="none"/></svg><span class="t" style="letter-spacing:-0.61px;">Class...</span></div>
<div class="it " style="top:269px"><svg class="abs" style="left:5px;top:3px" width="16" height="16" viewBox="0 0 16 16"><path d="M8.800 .9C11.200 .9 12.900 2.700 12.900 4.900C12.900 6.500 12 7.500 11.300 8.400C11 8.900 10.900 9.400 10.900 10H6.700C6.700 9.400 6.600 8.900 6.300 8.400C5.600 7.500 4.700 6.500 4.700 4.900C4.700 2.700 6.400 .9 8.800 .9Z" fill="#f0e6f4" stroke="#8e5aa8" stroke-width="1.100"/><path d="M6.900 11.400H10.700M6.900 12.900H10.700M7.700 14.400H9.900" stroke="#8e5aa8" stroke-width="1.100"/><path d="M7.800 5.200L8.800 7.500L9.800 5.200" stroke="#8e5aa8" stroke-width=".8" fill="none"/></svg><span class="t" style="letter-spacing:0.0px;">New EditorConfig</span></div>
<div class="sep" style="top:92px;left:29px;width:275px"></div>
<div class="sep" style="top:119px;left:29px;width:275px"></div>
<div class="sep" style="top:146px;left:29px;width:275px"></div>
<div class="sep" style="top:218px;left:29px;width:275px"></div>
<div class="sep" style="top:266px;left:29px;width:275px"></div>
</div>
</div>

<svg class="abs" style="left:0;top:0;pointer-events:none" width="1013" height="560" viewBox="0 0 1013 560" fill="none" stroke-linecap="round" stroke-linejoin="round">
<path d="M789.500 235.500H857" stroke="#ee6a55" stroke-width="3.600" stroke-linecap="butt"/>
<path d="M743.500 261.200H795.500" stroke="#ee6a55" stroke-width="4" stroke-linecap="butt"/>
<path d="M440 265H519.300" stroke="#ee6a55" stroke-width="3" stroke-linecap="butt"/>
<path d="M737.2 250.1C734.7 250.4 727.5 251.4 722.4 252.0C717.3 252.6 711.1 253.4 706.4 253.8C701.7 254.2 698.1 254.2 694.0 254.5C689.9 254.8 685.8 255.1 681.7 255.4C677.6 255.7 673.5 255.8 669.4 256.2C665.3 256.6 661.1 257.2 657.0 257.8C652.9 258.4 647.5 259.4 644.7 259.9C641.9 260.4 642.1 260.3 640.0 260.8C637.9 261.3 634.5 262.5 632.2 263.1C629.9 263.7 628.0 264.1 626.0 264.5C624.0 264.9 621.9 265.2 619.9 265.3C617.9 265.4 616.8 265.4 613.7 265.0C610.6 264.6 605.5 263.9 601.4 263.1C597.3 262.3 593.1 261.5 589.0 260.2C584.9 258.9 580.8 257.1 576.7 255.3C572.6 253.6 568.5 251.2 564.4 249.7C560.3 248.1 556.1 246.8 552.0 246.0C547.9 245.2 543.8 244.8 539.7 244.8C535.6 244.8 529.4 245.8 527.3 246.0" stroke="#ee6a55" stroke-width="2"/>
<path d="M537.200 236.800L526.700 246.600L536 252.200" stroke="#ee6a55" stroke-width="2.200"/>
<path d="M815.700 241.400C813.500 244.500 811.500 247 808.500 248.700C804 250.400 799 251 793 251" stroke="#ee6a55" stroke-width="2.200"/>
<path d="M800.600 243.400L792.700 250.900L802 258" stroke="#ee6a55" stroke-width="2.200"/>
</svg>
<div class="abs" id="wm">dir.by</div>
</body>
</html>
